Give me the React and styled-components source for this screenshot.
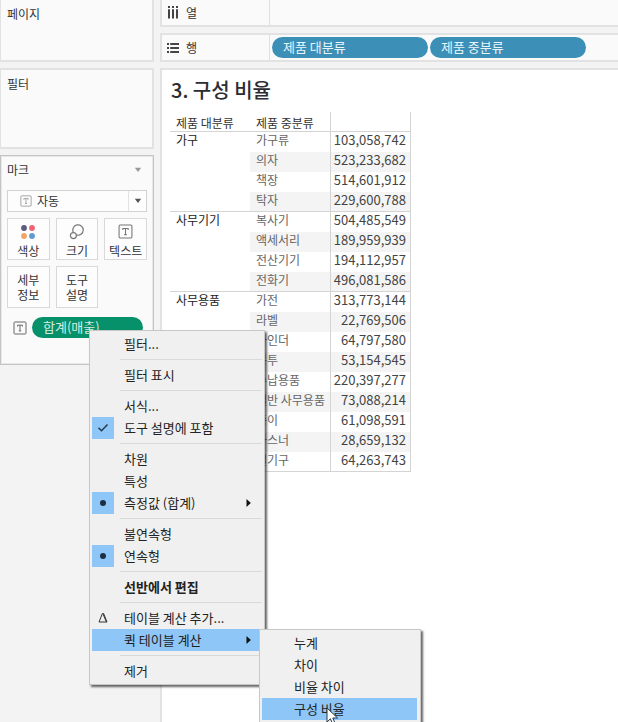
import React from "react";
import styled, { createGlobalStyle, css } from "styled-components";

const GlobalStyle = createGlobalStyle`
  *, *::before, *::after { box-sizing: border-box; }
  body {
    margin: 0;
    background: #f3f3f3;
    color: #333;
    font: 12px/20px "Noto Sans CJK KR", "Noto Sans", sans-serif;
  }
  button, select { font: inherit; color: inherit; }
  h1, h2, ul { margin: 0; padding: 0; font-weight: 400; }
`;

const Workspace = styled.div`
  display: grid;
  grid-template-columns: 154px minmax(0, 1fr);
  column-gap: 6px;
  height: 100vh;
  overflow: hidden;
`;

const Sidebar = styled.aside`
  display: flex;
  flex-direction: column;
  gap: 6px;
`;

const Card = styled.section`
  min-height: ${(p) => p.$height || 0}px;
  padding: 4px 6px;
  background: #fafafa;
  border: 2px solid #e2e2e2;
  border-left-width: 1px;
  ${(p) => p.$cutTop && css`border-top: 0;`}
`;

const MarksCard = styled(Card)`
  min-height: 210px;
  border: 1px solid #c4c4c4;
  box-shadow: inset 0 0 0 1px #e8e8e8;
`;

const CardTitle = styled.h2`
  font-size: 12px;
  line-height: 20px;
`;

const MarksHeader = styled.header`
  display: flex;
  align-items: center;
  justify-content: space-between;
  height: 20px;
  margin-bottom: 10px;
  padding-right: 5px;
`;

const TypePicker = styled.label`
  position: relative;
  display: block;
  height: 22px;
  margin-bottom: 6px;
  background: #fdfdfd;
  border: 1px solid #d2d2d2;
`;

const TypeSelect = styled.select`
  width: 100%;
  height: 20px;
  padding: 0 24px 0 29px;
  line-height: 18px;
  appearance: none;
  background: transparent;
  border: 0;
`;

const PickerIcon = styled.span`
  position: absolute;
  left: 12px;
  top: 4px;
  display: flex;
  color: #999;
  pointer-events: none;
`;

const PickerArrow = styled.span`
  position: absolute;
  right: 0;
  top: 0;
  bottom: 0;
  display: flex;
  align-items: center;
  justify-content: center;
  width: 18px;
  border-left: 1px solid #e2e2e2;
  color: #555;
  pointer-events: none;
`;

const MarkGrid = styled.div`
  display: grid;
  grid-template-columns: repeat(3, 1fr);
  gap: 6px;
  margin-bottom: 9px;
`;

const MarkButton = styled.button`
  display: flex;
  flex-direction: column;
  align-items: center;
  justify-content: ${(p) => (p.$text ? "center" : "space-between")};
  height: 42px;
  padding: ${(p) => (p.$text ? "0" : "5px 0 1px")};
  line-height: 15px;
  white-space: pre-line;
  background: #fdfdfd;
  border: 1px solid #d9d9d9;

  svg { color: #777; }
`;

const MarkPillRow = styled.div`
  display: flex;
  align-items: center;
  gap: 5px;
  padding: 0 4px 0 6px;
  color: #666;
`;

const PillAnchor = styled.div`
  position: relative;
  flex: 1;
`;

const Pill = styled.button`
  display: block;
  width: ${(p) => (p.$width ? `${p.$width}px` : "100%")};
  height: 21px;
  padding: 0 11px 2px;
  font-size: 13px;
  line-height: 18px;
  text-align: left;
  color: ${(p) => (p.$measure ? "#d5ede4" : "#e8f5fb")};
  background: ${(p) => (p.$measure ? "#07916a" : "#3c8fb6")};
  border: 0;
  border-radius: 11px;
`;

const Main = styled.main`
  display: flex;
  flex-direction: column;
  gap: 6px;
  min-width: 0;
`;

const Shelf = styled.section`
  display: flex;
  height: ${(p) => (p.$cutTop ? 27 : 29)}px;
  background: #fafafa;
  border: solid #e2e2e2;
  border-width: ${(p) => (p.$cutTop ? "0 0 2px 2px" : "2px 0 2px 2px")};
`;

const ShelfLabel = styled.h2`
  display: flex;
  align-items: center;
  gap: 7px;
  width: 108px;
  padding-left: 5px;
  font-size: 12px;
  border-right: 1px solid #e0e0e0;
`;

const ShelfPills = styled.div`
  display: flex;
  align-items: center;
  gap: 2px;
  padding-left: 2px;
`;

const Sheet = styled.section`
  flex: 1;
  padding: 6px 8px;
  background: #fff;
  border: solid #e2e2e2;
  border-width: 2px 0 0 2px;
`;

const SheetTitle = styled.h1`
  height: 36px;
  padding-left: 1px;
  font-size: 20px;
  font-weight: 500;
  line-height: 28px;
  color: #2c2c33;
`;

const DataTable = styled.table`
  width: 241px;
  table-layout: fixed;
  border-collapse: separate;
  border-spacing: 0;

  th, td {
    height: 20px;
    padding: 0 0 0 6px;
    font-weight: 400;
    line-height: 16px;
    text-align: left;
    vertical-align: top;
    white-space: nowrap;
  }
  thead th {
    color: #333;
    padding: 3px 0 0 6px;
    line-height: 16px;
  }
`;

const Col = styled.col`
  width: ${(p) => p.$width}px;
`;

const HeadCell = styled.th`
  border-bottom: 1px solid #d4d4d4;
  ${(p) => p.$value && css`
    border-left: 1px solid #d4d4d4;
    border-right: 1px solid #d4d4d4;
  `}
`;

const GroupCell = styled.th`
  color: #222;
  border-bottom: 1px solid #d4d4d4;
`;

const NameCell = styled.th`
  color: #666;
  background: ${(p) => (p.$band ? "#f4f4f4" : "#fff")};
  ${(p) => p.$last && css`border-bottom: 1px solid #d4d4d4;`}
`;

const ValueCell = styled.td`
  && {
    padding: 0 4px 0 0;
    font-size: 13px;
    text-align: right;
  }
  color: #444;
  background: ${(p) => (p.$band ? "#f4f4f4" : "#fff")};
  border-left: 1px solid #d4d4d4;
  border-right: 1px solid #d4d4d4;
  ${(p) => p.$last && css`border-bottom: 1px solid #d4d4d4;`}
`;

const Menu = styled.ul`
  position: absolute;
  left: ${(p) => (p.$sub ? "100%" : "57px")};
  top: ${(p) => (p.$sub ? "0" : "13px")};
  z-index: 2;
  width: ${(p) => (p.$sub ? 162 : 176)}px;
  padding: ${(p) => (p.$sub ? "2px 3px 6px 2px" : "2px 5px 2px 2px")};
  list-style: none;
  color: #222;
  background: #f0f0f0;
  border: 1px solid #c8c8c8;
  box-shadow: 2px 2px 2px rgba(0, 0, 0, 0.6);
`;

const MenuEntry = styled.li`
  position: relative;
`;

const MenuButton = styled.button`
  display: flex;
  align-items: center;
  gap: 10px;
  width: 100%;
  height: 22px;
  padding: 0 8px 0 0;
  font-size: 13px;
  font-weight: ${(p) => (p.$bold ? 700 : 400)};
  line-height: 20px;
  text-align: left;
  white-space: nowrap;
  background: ${(p) => (p.$active ? "#8fc6f8" : "transparent")};
  border: 0;
`;

const MenuIcon = styled.span`
  display: flex;
  flex: none;
  align-items: center;
  justify-content: center;
  width: 22px;
  height: 22px;
  background: ${(p) => (p.$checked ? "#8fc6f8" : "transparent")};
`;

const MenuText = styled.span`
  flex: 1;
`;

const MenuRule = styled.li`
  height: 1px;
  margin: 4px -3px 4px 28px;
  background: #d9d9d9;
`;

const Pointer = styled.svg`
  position: absolute;
  left: 64px;
  top: 9px;
`;

const TextIcon = ({ size = 14 }) => (
  <svg width={size} height={size} viewBox="0 0 14 14" fill="none" stroke="currentColor" aria-hidden="true">
    <rect x="1" y="1" width="12" height="12" rx="1" />
    <path d="M4.5 5.5v-1.3h5v1.3M7 4.2v5.6M5.8 9.9h2.4" />
  </svg>
);

const ColorIcon = () => (
  <svg width="16" height="16" viewBox="0 0 16 16" aria-hidden="true">
    <circle cx="4" cy="4" r="2.9" fill="#5c5b80" />
    <circle cx="12" cy="4" r="2.9" fill="#ee6672" />
    <circle cx="4" cy="12" r="2.9" fill="#f0a566" />
    <circle cx="12" cy="12" r="2.9" fill="#5e9bcf" />
  </svg>
);

const SizeIcon = () => (
  <svg width="16" height="16" viewBox="0 0 16 16" fill="none" stroke="#777" strokeWidth="1.2" aria-hidden="true">
    <path d="M4.3 8.2A5.2 5.2 0 1 1 7.9 11.1" />
    <circle cx="4.4" cy="11.6" r="3" />
  </svg>
);

const TriangleDown = ({ color = "currentColor" }) => (
  <svg width="8" height="6" viewBox="0 0 8 6" aria-hidden="true">
    <path d="M0.8 0.8h6.4L4 5z" fill={color} />
  </svg>
);

const ColumnsIcon = () => (
  <svg width="12" height="13" viewBox="0 0 12 13" stroke="#444" strokeWidth="2" aria-hidden="true">
    <path d="M2 0v2M6 0v2M10 0v2M2 3.3v9.2M6 3.3v9.2M10 3.3v9.2" />
  </svg>
);

const RowsIcon = () => (
  <svg width="12" height="12" viewBox="0 0 12 12" stroke="#444" strokeWidth="2" aria-hidden="true">
    <path d="M0 2h2M0 6h2M0 10h2M3.2 2h8.8M3.2 6h8.8M3.2 10h8.8" />
  </svg>
);

const menuIcons = {
  check: (
    <svg width="12" height="10" viewBox="0 0 12 10" fill="none" stroke="#24394d" strokeWidth="1.5" aria-hidden="true">
      <path d="M1.5 4.8l3 3L10.5 1.5" />
    </svg>
  ),
  dot: (
    <svg width="8" height="8" viewBox="0 0 8 8" aria-hidden="true">
      <circle cx="4" cy="4" r="3" fill="#1d3042" />
    </svg>
  ),
  delta: (
    <svg width="10" height="12" viewBox="0 0 10 12" fill="none" stroke="#333" aria-hidden="true">
      <path d="M4.4 1.5L1 10h8L5.6 1.5z" />
      <path d="M5 2L8.3 9.7" />
    </svg>
  ),
};

const SubmenuArrow = () => (
  <svg width="5" height="8" viewBox="0 0 5 8" aria-hidden="true">
    <path d="M0.5 0L4.8 4L0.5 8z" fill="#111" />
  </svg>
);

const groups = [
  { name: "가구", rows: [["가구류", "103,058,742"], ["의자", "523,233,682"], ["책장", "514,601,912"], ["탁자", "229,600,788"]] },
  { name: "사무기기", rows: [["복사기", "504,485,549"], ["액세서리", "189,959,939"], ["전산기기", "194,112,957"], ["전화기", "496,081,586"]] },
  {
    name: "사무용품",
    rows: [
      ["가전", "313,773,144"], ["라벨", "22,769,506"], ["바인더", "64,797,580"],
      ["봉투", "53,154,545"], ["수납용품", "220,397,277"], ["일반 사무용품", "73,088,214"],
      ["종이", "61,098,591"], ["파스너", "28,659,132"], ["필기구", "64,263,743"],
    ],
  },
];

const quickCalcs = [
  { label: "누계" },
  { label: "차이" },
  { label: "비율 차이" },
  { label: "구성 비율", active: true, pointer: true },
];

const fieldMenu = [
  { label: "필터..." },
  null,
  { label: "필터 표시" },
  null,
  { label: "서식..." },
  { label: "도구 설명에 포함", icon: "check" },
  null,
  { label: "차원" },
  { label: "특성" },
  { label: "측정값 (합계)", icon: "dot", arrow: true },
  null,
  { label: "불연속형" },
  { label: "연속형", icon: "dot" },
  null,
  { label: "선반에서 편집", bold: true },
  null,
  { label: "테이블 계산 추가...", icon: "delta" },
  { label: "퀵 테이블 계산", active: true, arrow: true, items: quickCalcs },
  null,
  { label: "제거" },
];

function MenuList({ items, sub, label }) {
  return (
    <Menu role="menu" aria-label={label} $sub={sub}>
      {items.map((item, i) =>
        item === null ? (
          <MenuRule key={i} role="separator" />
        ) : (
          <MenuEntry key={i} role="none">
            <MenuButton type="button" role="menuitem" $active={item.active} $bold={item.bold}>
              <MenuIcon $checked={item.icon === "check" || item.icon === "dot"}>
                {menuIcons[item.icon]}
              </MenuIcon>
              <MenuText>{item.label}</MenuText>
              {item.arrow && <SubmenuArrow />}
            </MenuButton>
            {item.items && <MenuList items={item.items} sub label={item.label} />}
            {item.pointer && (
              <Pointer width="14" height="20" viewBox="0 0 14 20" aria-hidden="true">
                <path d="M1 1v14l3.4-3.2 2.4 5.6 2.4-1-2.4-5.4h4.8z" fill="#fff" stroke="#26364a" />
              </Pointer>
            )}
          </MenuEntry>
        )
      )}
    </Menu>
  );
}

function Marks() {
  return (
    <MarksCard>
      <MarksHeader>
        <CardTitle>마크</CardTitle>
        <TriangleDown color="#999" />
      </MarksHeader>
      <TypePicker>
        <PickerIcon><TextIcon size={12} /></PickerIcon>
        <TypeSelect aria-label="마크 유형" defaultValue="auto">
          <option value="auto">자동</option>
        </TypeSelect>
        <PickerArrow><TriangleDown /></PickerArrow>
      </TypePicker>
      <MarkGrid>
        <MarkButton type="button"><ColorIcon />색상</MarkButton>
        <MarkButton type="button"><SizeIcon />크기</MarkButton>
        <MarkButton type="button"><TextIcon size={15} />텍스트</MarkButton>
        <MarkButton type="button" $text>{"세부\n정보"}</MarkButton>
        <MarkButton type="button" $text>{"도구\n설명"}</MarkButton>
      </MarkGrid>
      <MarkPillRow>
        <TextIcon />
        <PillAnchor>
          <Pill type="button" $measure>합계(매출)</Pill>
          <MenuList items={fieldMenu} label="합계(매출)" />
        </PillAnchor>
      </MarkPillRow>
    </MarksCard>
  );
}

function CrossTab() {
  return (
    <DataTable>
      <colgroup>
        <Col $width={80} />
        <Col $width={80} />
        <Col $width={81} />
      </colgroup>
      <thead>
        <tr>
          <HeadCell scope="col">제품 대분류</HeadCell>
          <HeadCell scope="col">제품 중분류</HeadCell>
          <HeadCell $value aria-label="매출" />
        </tr>
      </thead>
      {groups.map((group) => (
        <tbody key={group.name}>
          {group.rows.map(([name, value], i) => {
            const last = i === group.rows.length - 1;
            const band = i % 2 === 1;
            return (
              <tr key={name}>
                {i === 0 && <GroupCell scope="rowgroup" rowSpan={group.rows.length}>{group.name}</GroupCell>}
                <NameCell scope="row" $band={band} $last={last}>{name}</NameCell>
                <ValueCell $band={band} $last={last}>{value}</ValueCell>
              </tr>
            );
          })}
        </tbody>
      ))}
    </DataTable>
  );
}

export default function App() {
  return (
    <>
      <GlobalStyle />
      <Workspace>
        <Sidebar>
          <Card $height={62} $cutTop><CardTitle>페이지</CardTitle></Card>
          <Card $height={81}><CardTitle>필터</CardTitle></Card>
          <Marks />
        </Sidebar>
        <Main>
          <Shelf $cutTop>
            <ShelfLabel><ColumnsIcon />열</ShelfLabel>
          </Shelf>
          <Shelf>
            <ShelfLabel><RowsIcon />행</ShelfLabel>
            <ShelfPills>
              <Pill type="button" $width={156}>제품 대분류</Pill>
              <Pill type="button" $width={156}>제품 중분류</Pill>
            </ShelfPills>
          </Shelf>
          <Sheet>
            <SheetTitle>3. 구성 비율</SheetTitle>
            <CrossTab />
          </Sheet>
        </Main>
      </Workspace>
    </>
  );
}
